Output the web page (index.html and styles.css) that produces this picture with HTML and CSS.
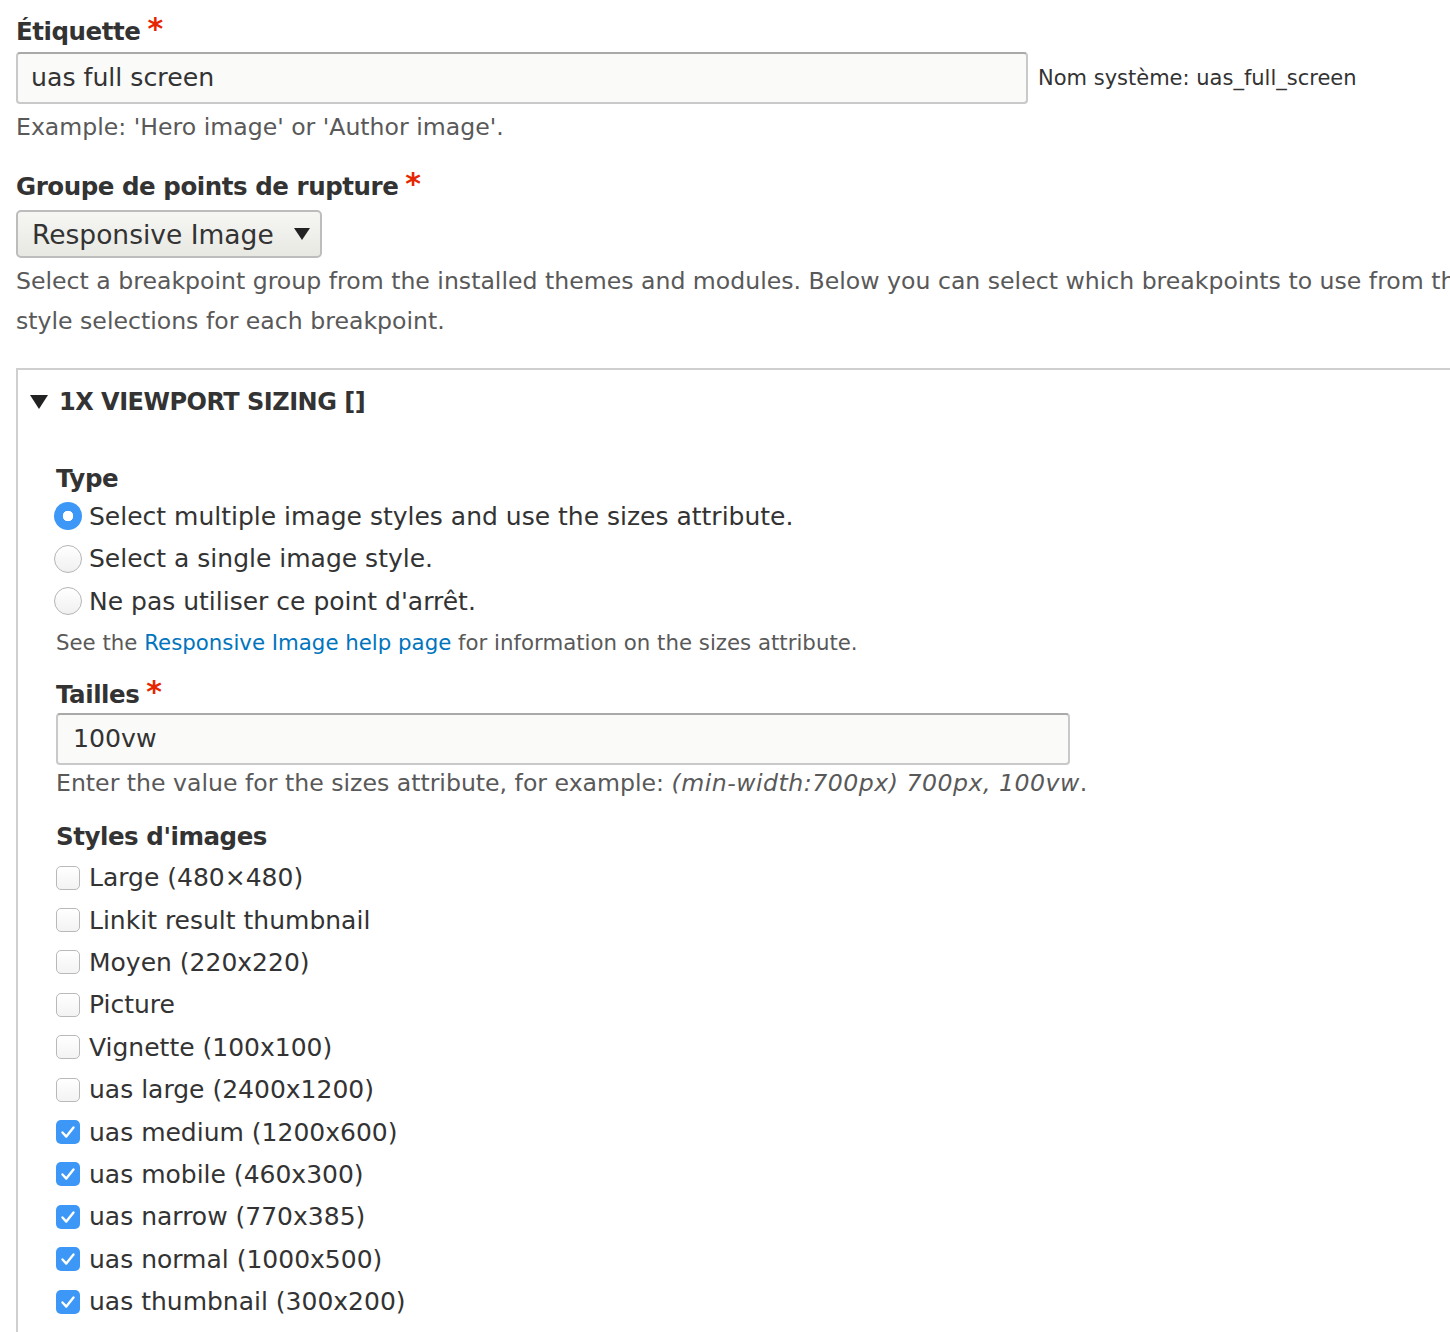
FILE: index.html
```html
<!DOCTYPE html>
<html lang="fr">
<head>
<meta charset="utf-8">
<title>Responsive image style</title>
<link rel="stylesheet" href="styles.css">
</head>
<body>
<div class="page">
  <div class="field">
    <label class="label">Étiquette<span class="req">*</span></label>
    <div class="inline-row">
      <div class="input input-wide">uas full screen</div>
      <span class="machine">Nom système: uas_full_screen</span>
    </div>
    <div class="desc">Example: 'Hero image' or 'Author image'.</div>
  </div>

  <div class="field field-2">
    <label class="label">Groupe de points de rupture<span class="req">*</span></label>
    <div class="select">Responsive Image <span class="arrow"></span></div>
    <div class="desc desc-multi">Select a breakpoint group from the installed themes and modules. Below you can select which breakpoints to use from this group and make image<br>style selections for each breakpoint.</div>
  </div>

  <div class="fieldset">
    <div class="summary"><span class="tri"></span>1X VIEWPORT SIZING []</div>
    <div class="fs-body">
      <div class="label label-type">Type</div>
      <div class="opts">
        <div class="opt"><span class="radio radio-on"></span>Select multiple image styles and use the sizes attribute.</div>
        <div class="opt"><span class="radio"></span>Select a single image style.</div>
        <div class="opt"><span class="radio"></span>Ne pas utiliser ce point d'arrêt.</div>
      </div>
      <div class="small-desc">See the <a class="link" href="#">Responsive Image help page</a> for information on the sizes attribute.</div>

      <label class="label label-tailles">Tailles<span class="req">*</span></label>
      <div class="input input-sizes">100vw</div>
      <div class="desc desc-sizes">Enter the value for the sizes attribute, for example: <em>(min-width:700px) 700px, 100vw</em>.</div>

      <div class="label label-styles">Styles d'images</div>
      <div class="checks">
        <div class="chk"><span class="box"></span>Large (480×480)</div>
        <div class="chk"><span class="box"></span>Linkit result thumbnail</div>
        <div class="chk"><span class="box"></span>Moyen (220x220)</div>
        <div class="chk"><span class="box"></span>Picture</div>
        <div class="chk"><span class="box"></span>Vignette (100x100)</div>
        <div class="chk"><span class="box"></span>uas large (2400x1200)</div>
        <div class="chk"><span class="box box-on"><svg viewBox="0 0 24 24" width="24" height="24"><path d="M6.5 12.5 L10.3 16.6 L17.5 7.5" fill="none" stroke="#fff" stroke-width="2.4" stroke-linecap="round" stroke-linejoin="round"/></svg></span>uas medium (1200x600)</div>
        <div class="chk"><span class="box box-on"><svg viewBox="0 0 24 24" width="24" height="24"><path d="M6.5 12.5 L10.3 16.6 L17.5 7.5" fill="none" stroke="#fff" stroke-width="2.4" stroke-linecap="round" stroke-linejoin="round"/></svg></span>uas mobile (460x300)</div>
        <div class="chk"><span class="box box-on"><svg viewBox="0 0 24 24" width="24" height="24"><path d="M6.5 12.5 L10.3 16.6 L17.5 7.5" fill="none" stroke="#fff" stroke-width="2.4" stroke-linecap="round" stroke-linejoin="round"/></svg></span>uas narrow (770x385)</div>
        <div class="chk"><span class="box box-on"><svg viewBox="0 0 24 24" width="24" height="24"><path d="M6.5 12.5 L10.3 16.6 L17.5 7.5" fill="none" stroke="#fff" stroke-width="2.4" stroke-linecap="round" stroke-linejoin="round"/></svg></span>uas normal (1000x500)</div>
        <div class="chk"><span class="box box-on"><svg viewBox="0 0 24 24" width="24" height="24"><path d="M6.5 12.5 L10.3 16.6 L17.5 7.5" fill="none" stroke="#fff" stroke-width="2.4" stroke-linecap="round" stroke-linejoin="round"/></svg></span>uas thumbnail (300x200)</div>
      </div>
    </div>
  </div>
</div>
</body>
</html>
```
FILE: styles.css
```css
html, body {
  margin: 0;
  padding: 0;
  background: #fff;
  overflow: hidden;
}
body {
  font-family: "DejaVu Sans", "Liberation Sans", sans-serif;
  color: #333;
}
.page {
  width: 1560px;
  padding: 14px 0 0 16px;
}
.label {
  display: block;
  font-weight: bold;
  font-size: 24.5px;
  letter-spacing: -0.45px;
  line-height: 36px;
  color: #333;
}
.req {
  color: #e62600;
  font-size: 30px;
  line-height: 0;
  font-weight: bold;
  letter-spacing: 0;
  margin-left: 7px;
  position: relative;
  top: -1px;
}
.inline-row {
  display: flex;
  align-items: center;
  margin-top: 2px;
}
.input {
  box-sizing: border-box;
  height: 52px;
  border: 2px solid #c9c9c9;
  border-top-color: #a9a9a9;
  border-radius: 4px;
  background: #fafaf9;
  font-size: 25.2px;
  line-height: 48px;
  padding-left: 13px;
  color: #333;
}
.input-wide {
  width: 1012px;
}
.machine {
  font-size: 21px;
  margin-left: 10px;
  color: #333;
}
.desc {
  font-size: 23.6px;
  line-height: 40px;
  color: #595959;
  margin-top: 3px;
}
.field-2 {
  margin-top: 22px;
}
.select {
  box-sizing: border-box;
  display: flex;
  align-items: center;
  width: 306px;
  height: 48px;
  margin-top: 5px;
  border: 2px solid #bdbdbd;
  border-radius: 5px;
  background: linear-gradient(#f6f6f3, #e8e8e3);
  font-size: 26.5px;
  padding-left: 14px;
  color: #333;
}
.arrow {
  width: 0;
  height: 0;
  border-left: 8.5px solid transparent;
  border-right: 8.5px solid transparent;
  border-top: 12px solid #222;
  margin-left: 20px;
}
.desc-multi {
  margin-top: 3px;
  white-space: nowrap;
}
.fieldset {
  margin-top: 27px;
  border: 2px solid #cfcfcf;
  border-right: none;
  border-bottom: none;
  height: 1000px;
}
.summary {
  display: flex;
  align-items: center;
  font-weight: bold;
  font-size: 24px;
  letter-spacing: -0.5px;
  line-height: 32px;
  padding: 16px 0 0 12px;
  color: #333;
}
.tri {
  width: 0;
  height: 0;
  border-left: 9px solid transparent;
  border-right: 9px solid transparent;
  border-top: 14px solid #222;
  margin-right: 11px;
}
.fs-body {
  padding-left: 38px;
}
.label-type {
  margin-top: 43px;
}
.opts {
  margin-top: -2px;
}
.opt, .chk {
  display: flex;
  align-items: center;
  font-size: 25px;
  color: #333;
}
.opt {
  height: 42.5px;
  margin-left: -2px;
}
.radio {
  box-sizing: border-box;
  width: 28px;
  height: 28px;
  border-radius: 50%;
  border: 1.5px solid #b5b5b5;
  background: linear-gradient(#fff, #f0f0f0);
  margin-right: 7px;
  flex: none;
}
.radio-on {
  border: none;
  background: radial-gradient(circle, #fff 0, #fff 5px, #3d97f7 5.5px);
}
.small-desc {
  font-size: 21.3px;
  line-height: 36px;
  color: #595959;
  margin-top: 2px;
}
.link {
  color: #0074bd;
  text-decoration: none;
}
.label-tailles {
  margin-top: 16px;
}
.input-sizes {
  width: 1014px;
  padding-left: 15px;
}
.desc-sizes {
  line-height: 36px;
  margin-top: 0;
}
.desc-sizes em {
  letter-spacing: 0.5px;
}
.label-styles {
  margin-top: 18px;
}
.checks {
  margin-top: 2px;
}
.chk {
  height: 42.4px;
}
.box {
  box-sizing: border-box;
  width: 24px;
  height: 24px;
  border-radius: 5px;
  border: 1.5px solid #b9b9b9;
  background: linear-gradient(#fff, #f3f3f3);
  margin-right: 9px;
  flex: none;
  display: flex;
}
.box-on {
  border: none;
  background: #3d97f7;
}
```
